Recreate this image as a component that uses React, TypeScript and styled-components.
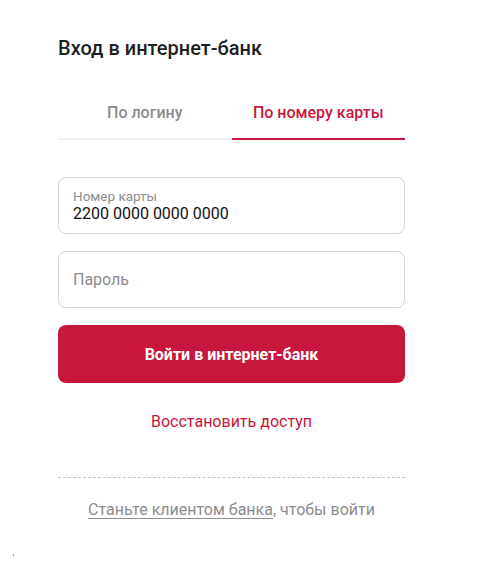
import React from "react";
import styled, { createGlobalStyle } from "styled-components";

const Global = createGlobalStyle`
  html, body { margin: 0; padding: 0; background: #fff; }
  body { font-family: Roboto, "Noto Sans", Arial, sans-serif; }
  * { box-sizing: border-box; }
`;

const Page = styled.div`
  width: 487px;
  height: 562px;
  padding: 36px 0 0 58px;
  position: relative;
`;

const Column = styled.div`
  width: 347px;
  display: flex;
  flex-direction: column;
`;

const Title = styled.h1`
  margin: 0;
  font-size: 20px;
  line-height: 24px;
  font-weight: 500;
  color: #1f1f1f;
`;

const Tabs = styled.div`
  display: flex;
  margin-top: 43px;
  border-bottom: 2px solid #f2f2f2;
`;

const Tab = styled.div<{ $active?: boolean }>`
  flex: 1;
  text-align: center;
  font-size: 16px;
  line-height: 20px;
  font-weight: 500;
  padding-bottom: 15px;
  margin-bottom: -2px;
  color: ${(p) => (p.$active ? "#c8173c" : "#8c8c8c")};
  border-bottom: 2px solid ${(p) => (p.$active ? "#c8173c" : "transparent")};
`;

const Fields = styled.div`
  display: flex;
  flex-direction: column;
  gap: 17px;
  margin-top: 37px;
`;

const Field = styled.div`
  height: 57px;
  border: 1px solid #d4d4d4;
  border-radius: 8px;
  padding: 0 14px;
  display: flex;
  flex-direction: column;
  justify-content: center;
`;

const Label = styled.div`
  font-size: 13.5px;
  line-height: 16px;
  color: #8c8c8c;
`;

const Value = styled.div`
  font-size: 16px;
  line-height: 20px;
  color: #111;
`;

const Placeholder = styled.div`
  font-size: 16px;
  line-height: 20px;
  color: #8c8c8c;
`;

const Button = styled.button`
  margin-top: 17px;
  height: 58px;
  border: none;
  border-radius: 8px;
  background: #c8173c;
  color: #fff;
  font-family: inherit;
  font-size: 16px;
  font-weight: 700;
`;

const Restore = styled.div`
  margin-top: 29px;
  text-align: center;
  font-size: 16px;
  line-height: 20px;
  color: #c8173c;
`;

const Divider = styled.div`
  margin-top: 45px;
  border-top: 1px dashed #c4c4c4;
`;

const Join = styled.div`
  margin-top: 22px;
  text-align: center;
  font-size: 16px;
  line-height: 20px;
  color: #8c8c8c;
`;

const JoinLink = styled.span`
  text-decoration: underline;
  text-underline-offset: 3px;
`;

const Dot = styled.div`
  position: absolute;
  left: 13px;
  top: 554px;
  width: 1px;
  height: 2px;
  background: #c8173c;
  opacity: 0.6;
`;

export default function App() {
  return (
    <>
      <Global />
      <Page>
        <Column>
          <Title>Вход в интернет-банк</Title>
          <Tabs>
            <Tab>По логину</Tab>
            <Tab $active>По номеру карты</Tab>
          </Tabs>
          <Fields>
            <Field>
              <Label>Номер карты</Label>
              <Value>2200 0000 0000 0000</Value>
            </Field>
            <Field>
              <Placeholder>Пароль</Placeholder>
            </Field>
          </Fields>
          <Button>Войти в интернет-банк</Button>
          <Restore>Восстановить доступ</Restore>
          <Divider />
          <Join>
            <JoinLink>Станьте клиентом банка</JoinLink>, чтобы войти
          </Join>
        </Column>
        <Dot />
      </Page>
    </>
  );
}
